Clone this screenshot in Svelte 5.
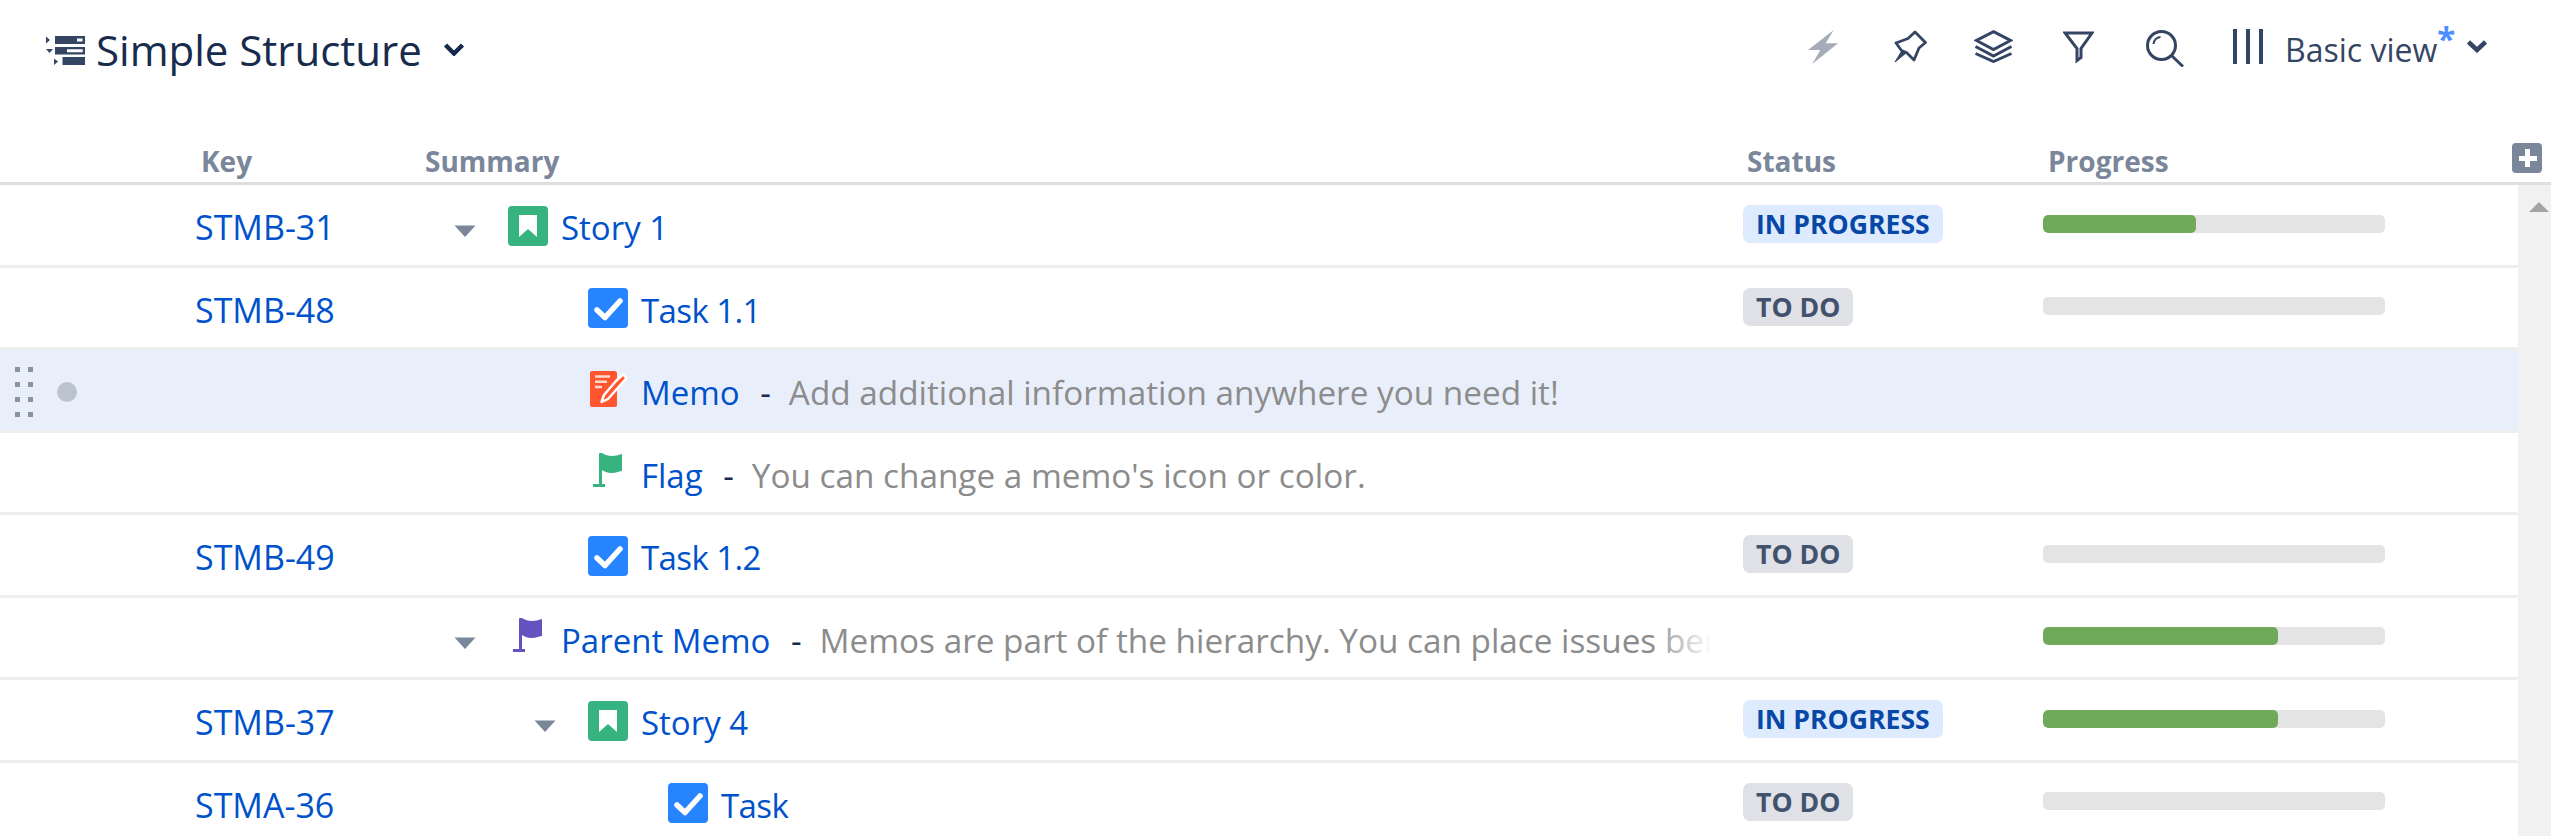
<script>
  const rows = [
    { key: 'STMB-31', level: 0, arrow: true, icon: 'story', title: 'Story 1', status: 'prog', bar: 44.8 },
    { key: 'STMB-48', level: 1, icon: 'task', title: 'Task 1.1', status: 'todo', bar: 0 },
    { level: 1, icon: 'memo', title: 'Memo', desc: 'Add additional information anywhere you need it!', active: true },
    { level: 1, icon: 'flag', title: 'Flag', desc: "You can change a memo's icon or color." },
    { key: 'STMB-49', level: 1, icon: 'task', title: 'Task 1.2', status: 'todo', bar: 0 },
    { level: 0, arrow: true, icon: 'parent', title: 'Parent Memo', desc: 'Memos are part of the hierarchy. You can place issues beneath them', bar: 68.7 },
    { key: 'STMB-37', level: 1, arrow: true, icon: 'story', title: 'Story 4', status: 'prog', bar: 68.7 },
    { key: 'STMA-36', level: 2, icon: 'task', title: 'Task', status: 'todo', bar: 0 }
  ];
</script>

<div class="page">
  <header class="toolbar">
    <div class="title">
      <svg class="logo" width="40" height="29" viewBox="0 0 40 29">
        <path d="M0 0.500l4 3.500-4 3.500z M0 13h7l-3.500 4z M8 22.500l4 3-4 3.500z" fill="#344563" />
        <path fill-rule="evenodd" d="M9 0h30v8H9z M31 2.500v3h5.500v-3z M9 11h30v7.500H9z M21 13.300v3h15.700v-3z M16.500 21H39v8H16.500z" fill="#344563" />
      </svg>
      <span class="name">Simple Structure</span>
      <svg class="chev" width="22" height="14" viewBox="0 0 22 14"><path d="M2.500 3l8.500 8.500L19.500 3" fill="none" stroke="#172b4d" stroke-width="4.500" /></svg>
    </div>
    <div class="tools">
      <svg class="bolt" width="30" height="35" viewBox="0 0 30 35"><path d="M25.700 1L0 21h12.300L4.300 35 30 14.300H17.700z" fill="#a5adba" /></svg>
      <svg class="pin" width="33" height="33" viewBox="0 0 33 33">
        <path d="M21 2l10.500 10.500-6.500 5.500-5 12-7.500-7.500-5-2-5.500-7.500 12-4.500z" fill="none" stroke="#344563" stroke-width="2.800" stroke-linejoin="round" />
        <path d="M1 32l6.700-11 4.300 2z" fill="#344563" stroke="#344563" />
      </svg>
      <svg class="layers" width="39" height="33" viewBox="0 0 39 33" fill="none" stroke="#344563" stroke-width="3">
        <path d="M19.500 1.700L36.500 10.500 19.500 19.500 2.500 10.500z" />
        <path d="M1.500 16.500l18 9.500 18-9.500" />
        <path d="M1.500 23.500l18 8 18-8" />
      </svg>
      <svg class="filter" width="31" height="33" viewBox="0 0 31 33"><path d="M2 2h27L18 17.500v9l-4 3V17.500z" fill="none" stroke="#344563" stroke-width="3" /></svg>
      <svg class="search" width="38" height="37" viewBox="0 0 38 37" fill="none" stroke="#344563" stroke-width="3">
        <circle cx="15.500" cy="15.500" r="14" />
        <path d="M25.500 25.500L37 36.500" />
        <path d="M7.500 14c.5-4 3-6.500 7-7" stroke-width="2" />
      </svg>
      <span class="cols"><i></i><i></i><i></i></span>
      <span class="view">Basic view<sup>*</sup></span>
      <svg class="chev2" width="20" height="14" viewBox="0 0 20 14"><path d="M1.500 3l8.500 8L18.500 3" fill="none" stroke="#344563" stroke-width="4.500" /></svg>
    </div>
  </header>

  <div class="head">
    <div class="c-key">Key</div>
    <div class="c-sum">Summary</div>
    <div class="c-status">Status</div>
    <div class="c-prog">Progress</div>
    <button class="plus" aria-label="Add column"><span></span></button>
  </div>

  <div class="body">
    <div class="rows">
      {#each rows as r}
        <div class="row" class:active={r.active}>
          {#if r.active}
            <span class="grip">{#each Array(8) as _}<i></i>{/each}</span>
            <span class="dot"></span>
          {/if}
          <div class="c-key key">{r.key ?? ''}</div>
          <div class="c-sum summary">
            <span class="indent l{r.level}"></span>
            <span class="toggle">{#if r.arrow}<svg width="22" height="12" viewBox="0 0 22 12"><path d="M0.500 0.500h21L11 12z" fill="#7a869a" /></svg>{/if}</span>
            <span class="icon">
              {#if r.icon === 'story'}
                <svg width="40" height="40" viewBox="0 0 40 40"><rect width="40" height="40" rx="4" fill="#36b37e" /><path d="M11 9h18v22l-9-8-9 8z" fill="#fff" /></svg>
              {:else if r.icon === 'task'}
                <svg width="40" height="40" viewBox="0 0 40 40"><rect width="40" height="40" rx="4" fill="#2684ff" /><path d="M9 22l8 7.500L32 13" fill="none" stroke="#fff" stroke-width="5.500" stroke-linecap="round" stroke-linejoin="round" /></svg>
              {:else if r.icon === 'memo'}
                <svg width="40" height="40" viewBox="0 0 40 40">
                  <g transform="translate(2 -1)">
                    <rect y="1" width="27" height="36" rx="2" fill="#ff5630" />
                    <path d="M5 6.500h15M5 11.800h12M5 17h7" stroke="#ffd9d0" stroke-width="2.600" />
                    <path d="M26 11l7-6.500 3.500 3.500L18 29l-6.500 3 2.500-7z" fill="#ff5630" stroke="#fff" stroke-width="2.400" stroke-linejoin="round" />
                  </g>
                </svg>
              {:else}
                <svg width="40" height="40" viewBox="0 0 40 40" class={r.icon === 'flag' ? 'green' : 'purple'}>
                  <path class="fp" transform="translate(4 -2)" d="M7 3c0-1 2-2 3-1 3 2 6 3 10 3 3 0 6-1 10-2v17c-5 1-7 2-11 2-3 0-6-1-9-3v14h3v3H1v-3h6z" />
                </svg>
              {/if}
            </span>
            <span class="line">
              <span class="link" class:tight={r.icon === 'task'}>{r.title}</span>
              {#if r.desc}<span class="dash">-</span><span class="desc">{r.desc}</span>{/if}
            </span>
            <span class="fade"></span>
          </div>
          <div class="c-status">
            {#if r.status === 'prog'}<span class="badge prog">IN PROGRESS</span>{/if}
            {#if r.status === 'todo'}<span class="badge todo">TO DO</span>{/if}
          </div>
          <div class="c-prog">
            {#if r.bar !== undefined}
              <div class="bar"><div class="fill" style="width:{r.bar}%"></div></div>
            {/if}
          </div>
        </div>
      {/each}
    </div>
    <div class="scroll"><span class="up"></span></div>
  </div>
</div>

<style>
  :global(body) { margin: 0; background: #fff; overflow: hidden; }
  .page { width: 2551px; height: 836px; overflow: hidden; font-family: "Open Sans", "Noto Sans", sans-serif; color: #172b4d; }
  svg { display: block; flex: none; }

  .toolbar { height: 135px; box-sizing: border-box; display: flex; justify-content: space-between; padding: 29px 64px 0 46px; align-items: flex-start; }
  .title { display: flex; align-items: center; height: 42px; position: relative; }
  .logo { margin-top: 0; }
  .name { font-size: 42px; line-height: 42px; margin-left: 10px; white-space: nowrap; }
  .chev { margin-left: 21px; margin-top: -2px; }
  .tools { display: flex; align-items: flex-start; }
  .bolt { margin-right: 56px; }
  .pin { margin-top: 1px; margin-right: 47px; }
  .layers { margin-top: 1px; margin-right: 50px; }
  .filter { margin-top: 2px; margin-right: 52px; }
  .search { margin-top: 1px; margin-right: 49px; }
  .cols { display: flex; gap: 9px; height: 35px; }
  .cols i { width: 4px; background: #344563; }
  .view { font-size: 32px; line-height: 42px; color: #344563; margin-left: 22px; width: 168px; flex: none; white-space: nowrap; position: relative; }
  .view sup { color: #4c8dff; font-size: 33px; font-weight: 700; line-height: 0; position: relative; top: -11px; vertical-align: baseline; }
  .chev2 { margin-top: 10px; margin-left: 14px; }

  .head { height: 50px; box-sizing: border-box; display: flex; border-bottom: 3px solid #dedede; position: relative; font-weight: 700; font-size: 28px; line-height: 53px; color: #7a869a; }
  .head .c-key { padding-left: 6px; }
  .head .c-sum { padding-left: 5px; }
  .head .c-status { padding-left: 4px; display: block; }
  .head .c-prog { padding-left: 5px; }

  .c-key { box-sizing: border-box; margin-left: 195px; width: 225px; flex: none; }
  .c-sum { box-sizing: border-box; width: 1323px; flex: none; }
  .c-status { box-sizing: border-box; width: 300px; flex: none; }
  .c-prog { box-sizing: border-box; width: 342px; flex: none; }

  .plus { position: absolute; left: 2512px; top: 8px; width: 30px; height: 30px; border: 0; padding: 0; border-radius: 4px; background: #7a869a; }
  .plus span { position: absolute; left: 13px; top: 6px; width: 5px; height: 18px; background: #fff; }
  .plus span::after { content: ""; position: absolute; left: -6.500px; top: 6.500px; width: 18px; height: 5px; background: #fff; }

  .body { display: flex; }
  .rows { width: 2518px; flex: none; }
  .scroll { width: 33px; height: 660px; background: #f1f1f1; position: relative; }
  .up { position: absolute; left: 11px; top: 17px; width: 0; height: 0; border-left: 10px solid transparent; border-right: 10px solid transparent; border-bottom: 10px solid #a3a3a3; }

  .row { height: 82.500px; box-sizing: border-box; border-bottom: 3px solid #eee; display: flex; align-items: center; position: relative; font-size: 33px; }
  .row.active { background: #e9effa; }
  .grip { position: absolute; left: 15px; top: 17px; display: grid; grid-template-columns: 5px 5px; column-gap: 8px; row-gap: 10px; }
  .grip i { width: 5px; height: 5px; background: #8993a4; }
  .dot { position: absolute; left: 57px; top: 32px; width: 20px; height: 20px; border-radius: 50%; background: #bcc3d0; }

  .key { color: #0052cc; font-size: 34px; line-height: 45px; padding-top: 6px; }
  .summary { display: flex; align-items: center; position: relative; overflow: hidden; white-space: nowrap; height: 62px; }
  .indent { flex: none; }
  .indent.l0 { width: 0; }
  .indent.l1 { width: 80px; }
  .indent.l2 { width: 160px; }
  .toggle { width: 88px; flex: none; box-sizing: border-box; padding-left: 34px; margin-top: 12px; }
  .icon { width: 40px; height: 40px; flex: none; margin-right: 13px; margin-top: 2px; }
  .line { flex: none; line-height: 45px; margin-top: 6px; }
  .link { color: #0052cc; }
  .tight { letter-spacing: -0.600px; }
  .dash { color: #172b4d; margin: 0 18px 0 12px; }
  .desc { color: #8c8c8c; font-size: 33.300px; }
  .fade { position: absolute; right: 31px; top: 0; bottom: 0; width: 60px; background: linear-gradient(to right, rgba(255,255,255,0), #fff); }
  .fade::after { content: ""; position: absolute; left: 60px; top: 0; bottom: 0; width: 31px; background: #fff; }
  .row.active .fade { display: none; }
  .green .fp { fill: #36b37e; }
  .purple .fp { fill: #6554c0; }

  .c-status { display: flex; align-items: center; }
  .row .c-status { margin-top: -1px; }
  .badge { font-weight: 700; font-size: 26.600px; line-height: 38px; height: 38px; padding: 0 13px; border-radius: 7px; white-space: nowrap; }
  .prog { background: #deebff; color: #0747a6; }
  .todo { background: #dfe1e6; color: #42526e; }
  .row .c-prog { margin-top: -2px; }
  .bar { height: 18px; width: 342px; background: #e4e4e4; border-radius: 5px; overflow: hidden; }
  .fill { height: 100%; background: #70a959; border-radius: 5px; }
</style>
